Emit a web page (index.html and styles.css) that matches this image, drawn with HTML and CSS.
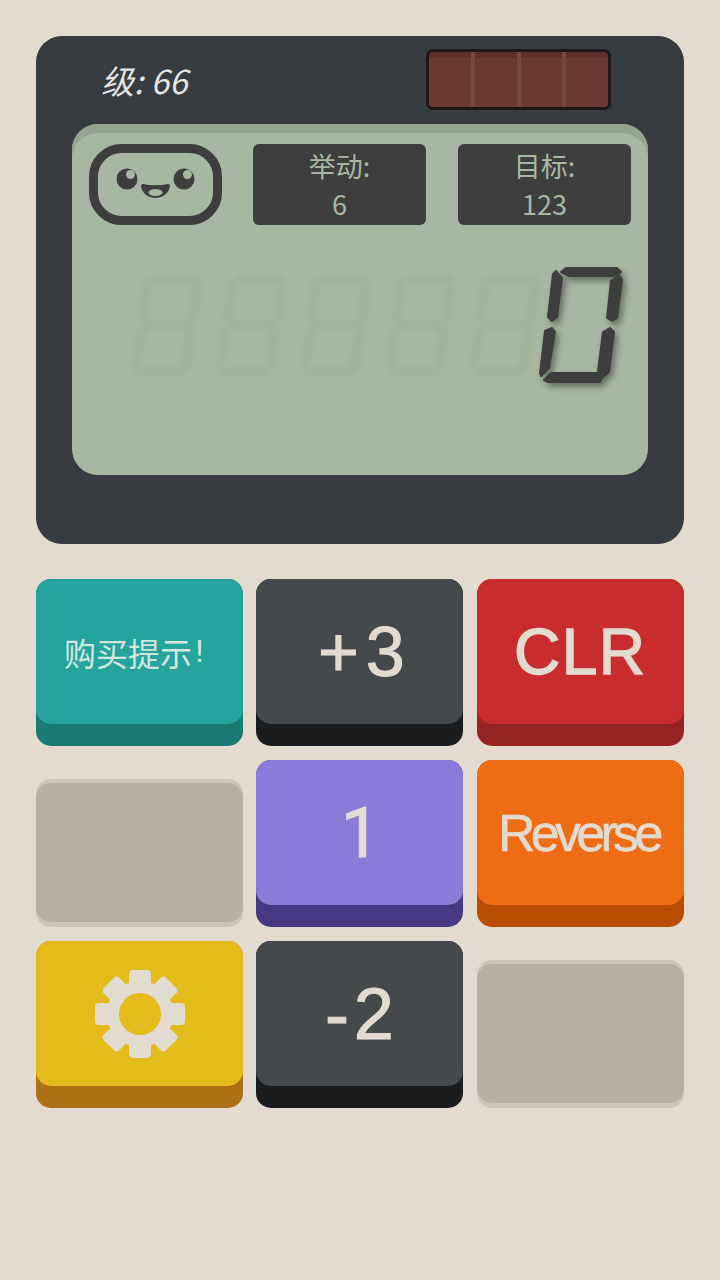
FILE: index.html
```html
<!DOCTYPE html>
<html lang="zh">
<head>
  <meta charset="UTF-8" />
  <meta name="viewport" content="width=device-width, initial-scale=1.0" />
  <title>Calculator</title>
  <link rel="stylesheet" href="styles.css">
</head>
<body>
  <div class="panel">
    <div class="panel-top">
      <div class="level">级: 66</div>
      <div class="solar"><i></i><i></i><i></i><i></i></div>
    </div>

    <div class="screen">
      <div class="screen-top">
        <svg class="face" viewBox="89 144 133 81" width="133" height="81">
          <rect x="93.500" y="148.500" width="124" height="72" rx="28" fill="none" stroke="#3e3e3e" stroke-width="9" />
          <circle cx="127" cy="179" r="10.500" fill="#3e3e3e" />
          <circle cx="130.500" cy="174.500" r="4.500" fill="#a7b8a2" />
          <circle cx="184" cy="179" r="10.500" fill="#3e3e3e" />
          <circle cx="187.500" cy="174.500" r="4.500" fill="#a7b8a2" />
          <path d="M141 186 Q141 184 143 184 Q155 186.500 168 184 Q170 184 170 186 C169 194 162 198 155.500 198 C149 198 142 194 141 186 Z" fill="#3e3e3e" />
          <ellipse cx="155.500" cy="192.500" rx="7" ry="3.500" fill="#a7b8a2" />
        </svg>
        <div class="stat">
          <span>举动:</span>
          <span>6</span>
        </div>
        <div class="stat">
          <span>目标:</span>
          <span>123</span>
        </div>
      </div>

      <svg class="digits" viewBox="72 255 576 140" width="576" height="140">
        <defs>
          <g id="digit8">
            <use href="#digit0" />
            <polygon points="552,324.500 558,320 606,320 612,324.500 606,329 558,329" />
          </g>
          <g id="digit0">
            <polygon points="561,272 566,268 617,268 621,272 613,276 569,276" />
            <polygon points="619,275 622,280 617,318 612,321 607,318 611,281" />
            <polygon points="556,271 562,278 557,317 552,321 548,317 553,274" />
            <polygon points="552,328 555,332 549,368 541,376 540,373 545,331" />
            <polygon points="610,328 614,332 609,372 603,377 598,371 603,332" />
            <polygon points="544,380 551,373 597,373 602,378 600,382 548,382" />
          </g>
        </defs>
        <g class="ghost">
          <use href="#digit8" transform="translate(-321 43) scale(.84 .87)" />
          <use href="#digit8" transform="translate(-236.500 43) scale(.84 .87)" />
          <use href="#digit8" transform="translate(-152 43) scale(.84 .87)" />
          <use href="#digit8" transform="translate(-67.500 43) scale(.84 .87)" />
          <use href="#digit8" transform="translate(17 43) scale(.84 .87)" />
        </g>
        <use class="lit" href="#digit0" />
      </svg>
    </div>
  </div>

  <div class="keys">
    <div class="key teal"><div class="key-face hint">购买提示<span class="bang">!</span></div></div>
    <div class="key dark"><div class="key-face plus">+3</div></div>
    <div class="key red"><div class="key-face clr">CLR</div></div>

    <div class="key off"><div class="key-face"></div></div>
    <div class="key purple"><div class="key-face one">1</div></div>
    <div class="key orange"><div class="key-face rev">Reverse</div></div>

    <div class="key yellow">
      <div class="key-face">
        <svg class="gear" viewBox="-45 -44 90 88" width="90" height="88">
          <g fill="#e2dbd0">
            <rect x="-11" y="-44" width="22" height="88" rx="4" />
            <rect x="-11" y="-44" width="22" height="88" rx="4" transform="rotate(45)" />
            <rect x="-45" y="-11" width="90" height="22" rx="4" />
            <rect x="-11" y="-44" width="22" height="88" rx="4" transform="rotate(-45)" />
            <circle r="33" />
          </g>
          <circle r="21" fill="#e3bc1c" />
        </svg>
      </div>
    </div>
    <div class="key dark"><div class="key-face minus">-2</div></div>
    <div class="key off"><div class="key-face"></div></div>
  </div>
</body>
</html>
```

FILE: styles.css
```css
* { box-sizing: border-box; }

body {
  margin: 0;
  padding: 36px;
  height: 1280px;
  background: #e3dbcf;
  font-family: 'Noto Sans CJK SC', sans-serif;
}

.panel {
  height: 508px;
  padding: 0 36px;
  background: #373c40;
  border-radius: 26px;
}

.panel-top {
  display: flex;
  justify-content: space-between;
  align-items: flex-start;
  height: 88px;
  padding: 13px 37px 0 29px;
}

.level {
  margin-top: 8px;
  font-size: 33px;
  line-height: 46px;
  font-style: italic;
  color: #e3e5e4;
}

.solar {
  display: flex;
  width: 185px;
  height: 61px;
  background: linear-gradient(#5e2f2b 0, #5e2f2b 6px, #6b3a33 6px);
  border: 3px solid #1c1918;
  border-radius: 7px;
}

.solar i {
  flex: 1;
  border-right: 4px solid #754840;
}

.solar i:last-child { border-right: 0; }

.screen {
  height: 351px;
  padding: 20px 17px 0;
  background: #a7b8a2;
  border-radius: 26px;
  box-shadow: inset 0 9px 0 #94a58f;
}

.screen-top {
  display: flex;
  align-items: flex-start;
}

.face { display: block; }

.stat {
  display: flex;
  flex-direction: column;
  align-items: center;
  width: 173px;
  height: 81px;
  margin-left: 31px;
  padding-top: 3px;
  background: #3e3e3e;
  border-radius: 6px;
  color: #a7b8a2;
  font-size: 27px;
  line-height: 38px;
}

.stat + .stat { margin-left: 32px; }

.digits {
  display: block;
  margin: 30px 0 0 -17px;
}

.ghost {
  fill: #a2b39d;
  stroke: #a2b39d;
  stroke-width: 2.500;
  stroke-linejoin: round;
  filter: blur(1.500px);
}

.lit {
  fill: #3e3e3e;
  stroke: #3e3e3e;
  stroke-width: 2;
  stroke-linejoin: round;
  filter: drop-shadow(3px 4px 3px rgba(0, 0, 0, 0.4));
}

.keys {
  display: grid;
  grid-template-columns: repeat(3, 207px);
  grid-auto-rows: 167px;
  column-gap: 13.400px;
  row-gap: 14px;
  margin-top: 35px;
}

.key {
  border-radius: 15px;
  color: #e3dbcf;
  font-family: 'Liberation Sans', sans-serif;
}

.key-face {
  display: flex;
  justify-content: center;
  align-items: center;
  height: 145px;
  border-radius: 15px;
  -webkit-text-stroke: 1px #e3dbcf;
}

.teal { background: #1a7a75; }
.teal .key-face { background: #25a39d; }
.dark { background: #1a1c1e; }
.dark .key-face { background: #45494c; }
.red { background: #962323; }
.red .key-face { background: #c92c2c; }
.purple { background: #463882; }
.purple .key-face { background: #8b7bd9; }
.orange { background: #b84c00; }
.orange .key-face { background: #ee6c14; }
.yellow { background: #ac7015; }
.yellow .key-face { background: #e3bc1c; }

.off {
  margin-top: 19px;
  padding-top: 4px;
  background: #cbc4b8;
}

.off .key-face {
  height: 139px;
  background: #b7afa3;
}

.hint {
  padding-right: 11px;
  font-family: 'Noto Sans CJK SC', sans-serif;
  font-size: 32px;
  color: #d3e6dc;
  -webkit-text-stroke: 0;
}

.bang {
  margin-left: 3px;
  font-family: 'Liberation Sans', sans-serif;
}

.plus {
  padding-left: 10px;
  font-size: 70px;
  letter-spacing: 7px;
}

.one {
  padding-left: 1px;
  font-family: Roboto, sans-serif;
  font-size: 70px;
}

.minus {
  padding-left: 4px;
  font-size: 72px;
  letter-spacing: 5px;
}

.clr {
  font-size: 64px;
  letter-spacing: 1.500px;
  -webkit-text-stroke-width: 1.500px;
}

.rev {
  padding-right: 4px;
  font-size: 52px;
  letter-spacing: -4.700px;
  -webkit-text-stroke-width: 0.500px;
}

.gear { display: block; }
```
